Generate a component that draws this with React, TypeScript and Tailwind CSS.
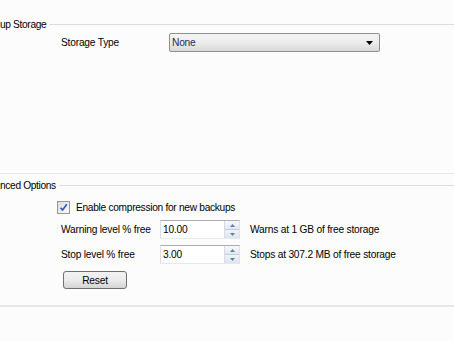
import { useState } from "react";

function Spinner() {
  return (
    <div className="flex flex-col w-[15px] h-[17px] border-l border-[#d6dbe3] bg-[#eef1f6]">
      <div className="flex-1 flex items-center justify-center border-b border-[#c3cbd8] bg-gradient-to-b from-[#f6f8fb] to-[#e3e8f0]">
        <svg width="5" height="3" viewBox="0 0 5 3"><path d="M0 3 L2.5 0 L5 3 Z" fill="#5c7fb0" /></svg>
      </div>
      <div className="flex-1 flex items-center justify-center bg-gradient-to-b from-[#f0f3f7] to-[#dfe5ee]">
        <svg width="5" height="3" viewBox="0 0 5 3"><path d="M0 0 L5 0 L2.5 3 Z" fill="#5c7fb0" /></svg>
      </div>
    </div>
  );
}

function NumberBox({ value }: { value: string }) {
  return (
    <div className="flex items-center shrink-0 w-[80px] h-[19px] bg-white border border-[#abadb3] border-b-[#e3e9ef] border-l-[#dbdfe6] border-r-[#e2e3ea]">
      <span className="flex-1 pl-[2px] text-black">{value}</span>
      <Spinner />
    </div>
  );
}

function GroupHeader({ label }: { label: string }) {
  return (
    <div className="flex items-center h-[14px]">
      <span className="text-black whitespace-nowrap tracking-[-0.35px]">{label}</span>
      <div className="flex-1 ml-[3px] border-t border-[#dddddd]" />
    </div>
  );
}

export default function App() {
  const [compress, setCompress] = useState(true);

  return (
    <div className="w-[454px] h-[341px] overflow-hidden bg-[#fcfcfc] text-[10.2px] tracking-[-0.2px] leading-[13px] text-black whitespace-nowrap" style={{ fontFamily: '"Liberation Sans", Arial, sans-serif' }}>
      <div className="pt-[17px]">
        <GroupHeader label="up Storage" />
        <div className="flex items-center h-[19px] mt-[2px] pl-[61px]">
          <span className="w-[108px] shrink-0">Storage Type</span>
          <div className="relative flex items-center shrink-0 w-[211px] h-[19px] rounded-[2px] border border-[#8e8f8f] bg-gradient-to-b from-[#f4f4f4] via-[#ececec] to-[#d9d9d9] pl-[2px]">
            <span className="text-[#1e2b59]">None</span>
            <svg className="absolute right-[6px] top-[7px]" width="7" height="4" viewBox="0 0 7 4"><path d="M0 0 L7 0 L3.5 4 Z" fill="#000" /></svg>
          </div>
        </div>
      </div>

      <div className="mt-[121px] border-t border-[#e6e6e6]" />

      <div className="mt-[4px]">
        <GroupHeader label="nced Options" />
        <div className="pl-[57px]">
          <label className="flex items-center h-[17px] mt-[7px] gap-[6px] cursor-default" onClick={() => setCompress(!compress)}>
            <span className="w-[13px] h-[13px] border border-[#979797] bg-gradient-to-br from-[#dcdcdc] to-[#fbfbfb] flex items-center justify-center">
              {compress && (
                <svg width="9" height="9" viewBox="0 0 9 9"><path d="M1.5 4.8 L3.6 7 L7.8 1.3" stroke="#2b58b8" strokeWidth="1.6" fill="none" /></svg>
              )}
            </span>
            <span className="tracking-[-0.3px]">Enable compression for new backups</span>
          </label>

          <div className="flex items-center h-[19px] mt-[4px] pl-[4px]">
            <span className="w-[99px] shrink-0">Warning level % free</span>
            <NumberBox value="10.00" />
            <span className="ml-[10px]">Warns at 1 GB of free storage</span>
          </div>

          <div className="flex items-center h-[19px] mt-[6px] pl-[4px]">
            <span className="w-[99px] shrink-0">Stop level % free</span>
            <NumberBox value="3.00" />
            <span className="ml-[10px]">Stops at 307.2 MB of free storage</span>
          </div>

          <button className="mt-[7px] ml-[6px] w-[64px] h-[18px] rounded-[3px] border border-[#707070] bg-gradient-to-b from-[#f2f2f2] via-[#ebebeb] to-[#d4d4d4] text-black flex items-center justify-center">
            Reset
          </button>
        </div>
      </div>

      <div className="mt-[16px] border-t-2 border-[#e8e8e8]" />
    </div>
  );
}
